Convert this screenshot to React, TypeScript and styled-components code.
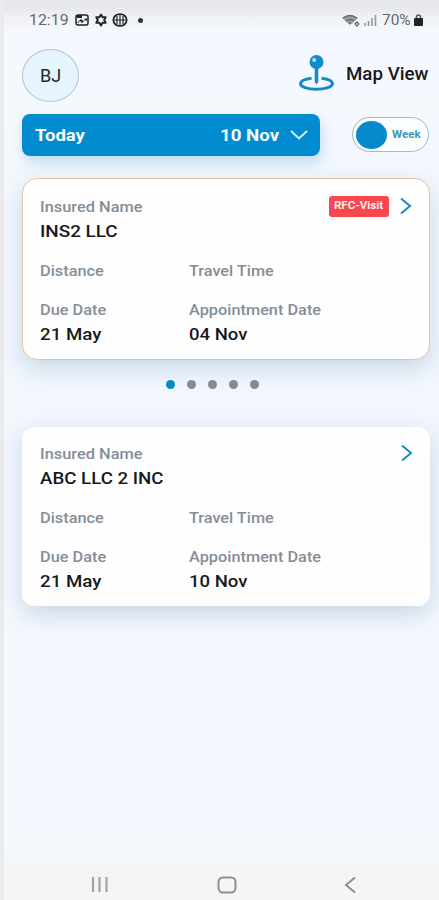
import React from "react";
import styled, { createGlobalStyle } from "styled-components";

const GlobalStyle = createGlobalStyle`
  * { box-sizing: border-box; }
  body { margin: 0; background: #ebebed; font-family: Roboto, sans-serif; }
`;

const Screen = styled.div`
  width: 439px;
  height: 900px;
  padding-left: 4px;
  background: #ebebed;
  overflow: hidden;
`;

const Page = styled.div`
  height: 900px;
  display: flex;
  flex-direction: column;
  background: linear-gradient(
    #e5e6ea 0,
    #e5e6ea 6px,
    #eff1f6 16px,
    #f5f8fe 32px,
    #f5f9fe 100px,
    #f3f7fe 400px,
    #f5f8fe 640px,
    #f5f9fe 852px
  );
`;

const Text = styled.span<{ $size: number; $weight?: number; $color?: string; $line?: number; $stretch?: number }>`
  display: block;
  white-space: nowrap;
  font-size: ${(p) => p.$size}px;
  line-height: ${(p) => p.$line ?? 20}px;
  font-weight: ${(p) => p.$weight ?? 400};
  color: ${(p) => p.$color ?? "#17191c"};
  transform: scaleX(${(p) => p.$stretch ?? 1});
  transform-origin: left center;
`;

const StatusBar = styled.header`
  height: 40px;
  padding: 0 15px 0 25px;
  display: flex;
  justify-content: space-between;
`;

const StatusGroup = styled.div`
  height: 40px;
  display: flex;
  align-items: center;
`;

const Clock = styled.div`
  width: 46px;
`;

const Percent = styled.div`
  width: 31px;
`;

const Header = styled.div`
  height: 74px;
  padding: 9px 11px 0 18px;
  display: flex;
  justify-content: space-between;
`;

const Avatar = styled.div`
  width: 57px;
  height: 53px;
  border: 1px solid #b9c4cd;
  border-radius: 50%;
  background: #e6f4fd;
  display: flex;
  align-items: center;
  justify-content: center;
`;

const MapLink = styled.div`
  display: flex;
  height: 50px;
  align-items: center;
  gap: 11px;
`;

const MapLabel = styled.div`
  width: 82px;
`;

const Filters = styled.div`
  display: flex;
  height: 64px;
  padding: 0 10px 0 18px;
  justify-content: space-between;
`;

const DateSelect = styled.div`
  width: 298px;
  height: 42px;
  padding: 0 12px 0 13px;
  border-radius: 8px;
  background: #038bd0;
  box-shadow: 2px 7px 14px rgba(55, 145, 205, 0.27);
  display: flex;
  align-items: center;
`;

const SelectedDate = styled.div`
  margin-left: auto;
  margin-right: 10px;
  width: 60px;
`;

const Toggle = styled.div`
  width: 77px;
  height: 35px;
  margin-top: 3px;
  border: 1px solid #8fc0cf;
  border-radius: 18px;
  background: #fbfdff;
  display: flex;
  align-items: center;
  padding-left: 3px;
  gap: 5px;
`;

const Knob = styled.div`
  width: 31px;
  height: 28px;
  border-radius: 50%;
  background: #078acb;
`;

const Card = styled.article<{ $outlined?: boolean }>`
  width: 408px;
  height: ${(p) => (p.$outlined ? 182 : 179)}px;
  margin-left: 18px;
  padding: ${(p) => (p.$outlined ? 20 : 19)}px 16px 0 ${(p) => (p.$outlined ? 17 : 18)}px;
  flex-shrink: 0;
  background: #fefefe;
  border: ${(p) => (p.$outlined ? "1px solid #e3c5a6" : "none")};
  border-radius: ${(p) => (p.$outlined ? 15 : 12)}px;
  box-shadow: 0 8px 24px rgba(90, 140, 168, 0.3);
`;

const CardTop = styled.div`
  height: 64px;
  display: flex;
  justify-content: space-between;
`;

const CardActions = styled.div`
  display: flex;
  height: 14px;
  align-items: center;
  gap: 10px;
`;

const Badge = styled.div`
  width: 60px;
  height: 21px;
  padding-left: 5px;
  border-radius: 3px;
  background: #f9484d;
  display: flex;
  align-items: center;
`;

const Fields = styled.div`
  display: grid;
  grid-template-columns: 149px 1fr;
  grid-template-rows: 39px auto;
`;

const Field = styled.div`
  display: flex;
  flex-direction: column;
  gap: 6px;
`;

const Dots = styled.div`
  height: 67px;
  padding: 20px 0 0 162px;
  display: flex;
  gap: 12px;
`;

const Dot = styled.span<{ $active?: boolean }>`
  width: 9px;
  height: 9px;
  border-radius: 50%;
  background: ${(p) => (p.$active ? "#078aca" : "#818b94")};
`;

const NavBar = styled.nav`
  height: 48px;
  margin-top: auto;
  padding: 24px 82px 0 86px;
  display: flex;
  justify-content: space-between;
  background: linear-gradient(#f5f8fb, #f4f5f5 16px);
`;

const LABEL = "#858e98";

const Chevron = () => (
  <svg width="14" height="20" viewBox="0 0 14 20" fill="none" stroke="#198bbd" strokeWidth="2">
    <path d="M2 2.5 11 10 2 17.5" />
  </svg>
);

const PinIcon = () => (
  <svg width="37" height="38" viewBox="0 0 37 38" fill="none">
    <path d="M13.5 23.3C6.500 24.200 2.500 26.300 2.500 28.700c0 3.100 7.100 5.600 16 5.600s16-2.500 16-5.600c0-2.400-4-4.500-11-5.400" stroke="#138aca" strokeWidth="3" />
    <path d="M16.700 13h3.600v14l-1.800 2.500-1.800-2.500z" fill="#138aca" />
    <circle cx="18.500" cy="7" r="7" fill="#138aca" />
    <circle cx="16.200" cy="5" r="2" fill="#b4e2f4" />
  </svg>
);

const ImageIcon = () => (
  <svg width="14" height="12" viewBox="0 0 14 12">
    <rect x="1" y="1" width="12" height="10" rx="2" fill="#eef0f4" stroke="#202327" strokeWidth="1.5" />
    <path d="M2 1h5v3H2zM2 9l4-4 2 2 3-3 1 1v2l-2-1-3 3-2-2-2 2z" fill="#202327" />
  </svg>
);

const GearIcon = () => (
  <svg width="14" height="14" viewBox="0 0 14 14" fill="none" stroke="#24272b" strokeLinejoin="round">
    <path d="m7 1.500 1.600 2.700h3.100L10.200 7l1.500 2.800H8.600L7 12.500 5.400 9.800H2.300L3.800 7 2.300 4.200h3.100z" strokeWidth="2" />
  </svg>
);

const BallIcon = () => (
  <svg width="16" height="14" viewBox="0 0 16 14" fill="none" stroke="#202327">
    <ellipse cx="8" cy="7" rx="6.700" ry="6" strokeWidth="1.700" />
    <path d="M8 1v12M1.500 7h13M5 3v8M11 3v8" strokeWidth="1.200" />
  </svg>
);

const WifiIcon = () => (
  <svg width="19" height="13" viewBox="0 0 19 13" fill="none">
    <path d="M0 4Q8 -2 16 4L8 11z" fill="#9a9da1" />
    <path d="M1 4Q8-1 15 4M4 7q4-3 8 0M7 9.500q1-1 2 0" stroke="#65696e" strokeWidth="1.300" />
    <path d="m13 10 2-2 2 2M13 10l2 2 2-2" stroke="#55595e" strokeWidth="1.200" />
  </svg>
);

const SignalIcon = () => (
  <svg width="13" height="12" viewBox="0 0 13 12" fill="none" stroke="#94979b" strokeWidth="1.600">
    <path d="M1 9v3M4.500 7v5M8 4v8M11.500 1v11" />
  </svg>
);

const LockIcon = () => (
  <svg width="11" height="12" viewBox="0 0 11 12" fill="none">
    <path d="M3.500 5V3q0-2 2-2t2 2v2" stroke="#55595e" strokeWidth="1.500" />
    <rect x="1" y="4" width="9" height="8" rx="1" fill="#202327" />
  </svg>
);

const StatusGap = styled.span<{ $w: number }>`
  width: ${(p) => p.$w}px;
`;

const StatusDot = styled.span`
  width: 5px;
  height: 5px;
  margin-left: 10px;
  border-radius: 50%;
  background: #303338;
`;

type Visit = { name: string; nameStretch: number; due: string; appointment: string; badge?: string };

const VisitCard = ({ name, nameStretch, due, appointment, badge }: Visit) => (
  <Card $outlined={!!badge}>
    <CardTop>
      <Field>
        <Text $size={14} $weight={500} $color={LABEL} $line={16} $stretch={1.17}>Insured Name</Text>
        <Text $size={17} $weight={500} $stretch={nameStretch}>{name}</Text>
      </Field>
      <CardActions>
        {badge && (
          <Badge>
            <Text $size={10} $weight={700} $color="#ffe9ec" $stretch={1.15}>{badge}</Text>
          </Badge>
        )}
        <Chevron />
      </CardActions>
    </CardTop>
    <Fields>
      <Text $size={14} $weight={500} $color={LABEL} $line={16} $stretch={1.165}>Distance</Text>
      <Text $size={14} $weight={500} $color={LABEL} $line={16} $stretch={1.16}>Travel Time</Text>
      <Field>
        <Text $size={14} $weight={500} $color={LABEL} $line={16} $stretch={1.165}>Due Date</Text>
        <Text $size={17} $weight={500} $stretch={1.1}>{due}</Text>
      </Field>
      <Field>
        <Text $size={14} $weight={500} $color={LABEL} $line={16} $stretch={1.165}>Appointment Date</Text>
        <Text $size={17} $weight={500} $stretch={1.09}>{appointment}</Text>
      </Field>
    </Fields>
  </Card>
);

export default function App() {
  return (
    <>
      <GlobalStyle />
      <Screen>
        <Page>
          <StatusBar>
            <StatusGroup>
              <Clock>
                <Text $size={15} $color="#65686d" $stretch={1.06}>12:19</Text>
              </Clock>
              <ImageIcon />
              <StatusGap $w={5} />
              <GearIcon />
              <StatusGap $w={4} />
              <BallIcon />
              <StatusDot />
            </StatusGroup>
            <StatusGroup>
              <WifiIcon />
              <StatusGap $w={3} />
              <SignalIcon />
              <StatusGap $w={5} />
              <Percent>
                <Text $size={15} $color="#65686d" $stretch={1.03}>70%</Text>
              </Percent>
              <LockIcon />
            </StatusGroup>
          </StatusBar>
          <Header>
            <Avatar>
              <Text $size={18} $color="#20272d">BJ</Text>
            </Avatar>
            <MapLink>
              <PinIcon />
              <MapLabel>
                <Text $size={18} $weight={500} $stretch={1.04}>Map View</Text>
              </MapLabel>
            </MapLink>
          </Header>
          <Filters>
            <DateSelect>
              <Text $size={17} $weight={700} $color="#f6fcff" $stretch={1.09}>Today</Text>
              <SelectedDate>
                <Text $size={17} $weight={700} $color="#f6fcff" $stretch={1.1}>10 Nov</Text>
              </SelectedDate>
              <svg width="18" height="12" viewBox="0 0 18 12" fill="none" stroke="#d4effc" strokeWidth="2">
                <path d="m1 2 8 7.500L17 2" />
              </svg>
            </DateSelect>
            <Toggle>
              <Knob />
              <Text $size={10} $weight={700} $color="#4497bd" $stretch={1.16}>Week</Text>
            </Toggle>
          </Filters>
          <VisitCard name="INS2 LLC" nameStretch={1.11} due="21 May" appointment="04 Nov" badge="RFC-Visit" />
          <Dots>
            <Dot $active />
            <Dot />
            <Dot />
            <Dot />
            <Dot />
          </Dots>
          <VisitCard name="ABC LLC 2 INC" nameStretch={1.1} due="21 May" appointment="10 Nov" />
          <NavBar>
            <svg width="20" height="16" viewBox="0 0 20 16" fill="none" stroke="#a2a3a4" strokeWidth="2.200">
              <path d="M3 1v15M9.500 1v15M16.500 1v15" />
            </svg>
            <svg width="20" height="18" viewBox="0 0 20 18" fill="none" stroke="#8c8e8f" strokeWidth="2">
              <rect x="1.500" y="1.500" width="17" height="15" rx="4.500" />
            </svg>
            <svg width="14" height="18" viewBox="0 0 14 18" fill="none" stroke="#8c8e8f" strokeWidth="2">
              <path d="M12 1.500 3 9l9 7.500" />
            </svg>
          </NavBar>
        </Page>
      </Screen>
    </>
  );
}
